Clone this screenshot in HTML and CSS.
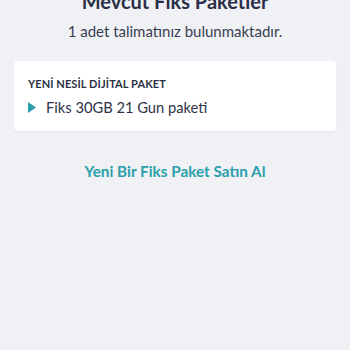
FILE: index.html
```html
<!DOCTYPE html>
<html lang="tr">
<head>
<meta charset="utf-8">
<link rel="stylesheet" href="styles.css">
</head>
<body>
<main class="page">
  <h1 class="title">Mevcut Fiks Paketler</h1>
  <p class="subtitle">1 adet talimatınız bulunmaktadır.</p>
  <section class="card">
    <div class="card-label">YENİ NESİL DİJİTAL PAKET</div>
    <div class="card-row">
      <svg class="arrow" width="8" height="11" viewBox="0 0 8 11"><path d="M0 0 L8 5.5 L0 11 Z" fill="#2a9faa"/></svg>
      <span class="card-text">Fiks 30GB 21 Gun paketi</span>
    </div>
  </section>
  <a class="link" href="#">Yeni Bir Fiks Paket Satın Al</a>
</main>
</body>
</html>
```
FILE: styles.css
```css
html, body {
  margin: 0;
  padding: 0;
  background: #f0f1f5;
  height: 100%;
}
body {
  font-family: Lato, "Noto Sans", sans-serif;
  color: #2b3045;
  overflow: hidden;
}
.page {
  display: flex;
  flex-direction: column;
  align-items: stretch;
  padding: 0 14px;
}
.title {
  margin: -11px 0 0;
  font-size: 20px;
  line-height: 24px;
  font-weight: 700;
  text-align: center;
  color: #2a2f47;
}
.subtitle {
  margin: 8px 0 0;
  font-size: 15px;
  line-height: 20px;
  text-align: center;
  color: #383d52;
}
.card {
  margin-top: 20px;
  background: #ffffff;
  border-radius: 4px;
  box-shadow: 0 1px 3px rgba(40, 50, 80, 0.05);
  padding: 16px 14px 14px;
  display: flex;
  flex-direction: column;
  gap: 6px;
}
.card-label {
  font-size: 11px;
  line-height: 14px;
  font-weight: 700;
  color: #2b3045;
  letter-spacing: 0.1px;
}
.card-row {
  display: flex;
  align-items: center;
  gap: 10px;
}
.arrow {
  flex: none;
}
.card-text {
  font-size: 14.7px;
  line-height: 20px;
  color: #2e3348;
}
.link {
  margin-top: 30px;
  align-self: center;
  font-size: 15.3px;
  line-height: 20px;
  font-weight: 700;
  color: #2a9faa;
  text-decoration: none;
}
```
